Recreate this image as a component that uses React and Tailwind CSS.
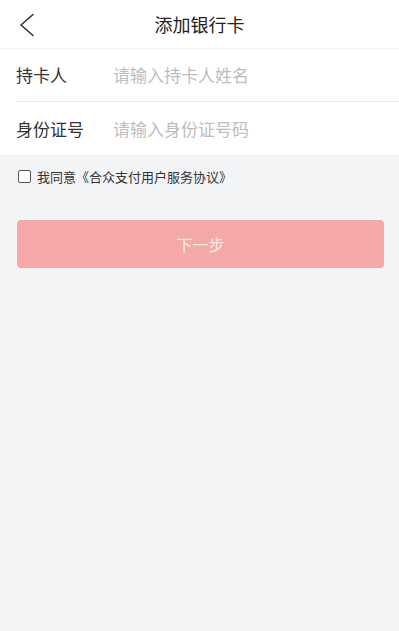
const fields = [
  { label: '持卡人', placeholder: '请输入持卡人姓名' },
  { label: '身份证号', placeholder: '请输入身份证号码' },
];

export default function App() {
  return (
    <div
      className="min-h-[631px] w-full bg-[#f3f4f6] text-[#333]"
      style={{ fontFamily: '"Noto Sans CJK SC", "Noto Sans", sans-serif' }}
    >
      <header className="relative flex h-[49px] items-center justify-center bg-white border-b border-[#f2f2f2]">
        <button className="absolute left-[19px] top-[13px] text-[#333]">
          <svg width="16" height="24" viewBox="0 0 16 24" fill="none">
            <polyline points="14,1.5 2,12 14,22.5" stroke="#333" strokeWidth="1.6" strokeLinecap="round" strokeLinejoin="round" />
          </svg>
        </button>
        <h1 className="text-[18px] text-[#222]">添加银行卡</h1>
      </header>

      <div className="bg-white">
        {fields.map((f, i) => (
          <div
            key={f.label}
            className={
              'ml-[16px] flex h-[53px] items-center ' +
              (i === 0 ? 'border-b border-[#ececec]' : '')
            }
          >
            <span className="w-[97px] text-[17px] text-[#333]">{f.label}</span>
            <input
              className="flex-1 bg-transparent text-[17px] outline-none placeholder:text-[#bdbdbd]"
              placeholder={f.placeholder}
            />
          </div>
        ))}
      </div>

      <label className="flex items-center gap-[6px] px-[18px] pt-[12px] text-[13px] text-[#333]">
        <span className="h-[13px] w-[13px] rounded-[2px] border border-[#555] bg-white" />
        我同意《合众支付用户服务协议》
      </label>

      <div className="ml-[17px] mr-[15px] pt-[33px]">
        <button className="flex h-[48px] w-full items-center justify-center rounded-[4px] bg-[#f5a8a8] text-[16px] text-[#fde9e9]">
          下一步
        </button>
      </div>
    </div>
  );
}
